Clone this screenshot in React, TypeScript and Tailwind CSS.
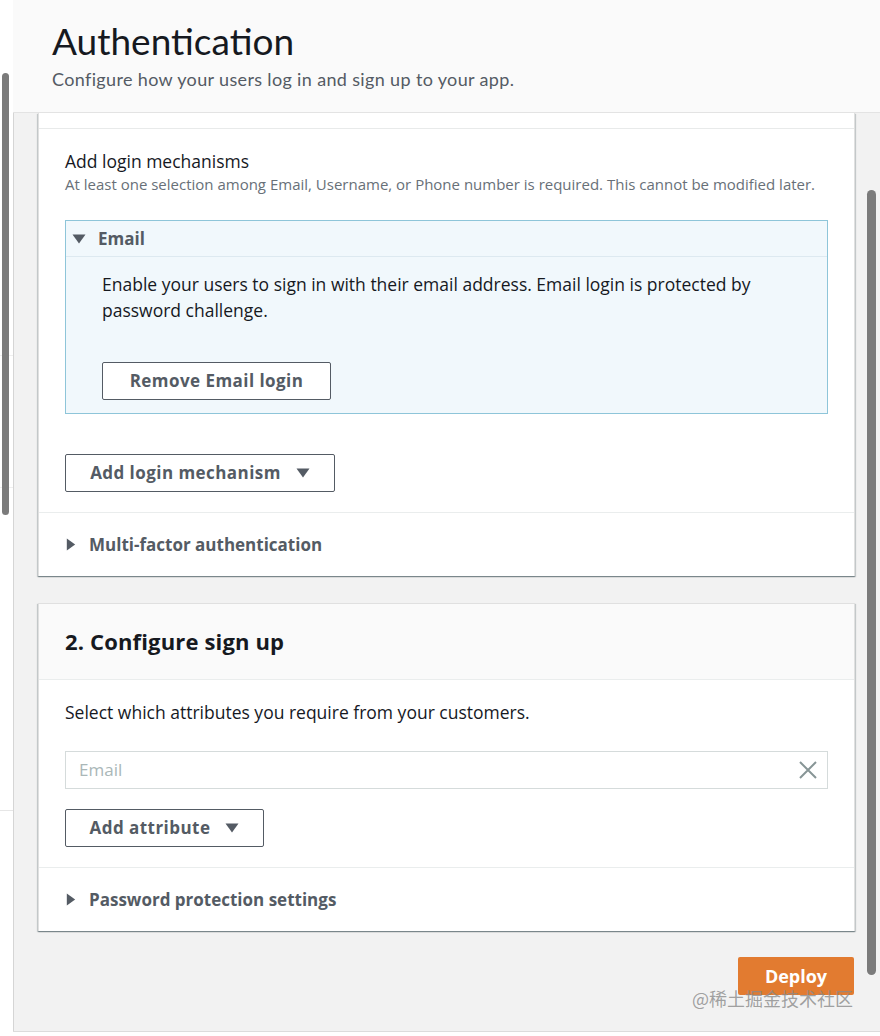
import React from 'react';

const FONT = "font-['Open_Sans','Liberation_Sans',sans-serif]";
const HEAD_FONT = "font-['Lato','Open_Sans',sans-serif]";

function DownTri({ className = '' }: { className?: string }) {
  return (
    <svg viewBox="0 0 14 10" className={className} fill="currentColor">
      <path d="M0.5 0.5h13L7 9.5z" />
    </svg>
  );
}

function RightTri({ className = '' }: { className?: string }) {
  return (
    <svg viewBox="0 0 10 14" className={className} fill="currentColor">
      <path d="M0.5 0.5L9.5 7L0.5 13.5z" />
    </svg>
  );
}

function OutlineButton({ label, caret, className = '' }: { label: string; caret?: boolean; className?: string }) {
  return (
    <button
      className={`h-[38px] flex items-center justify-center gap-[15px] border border-[#545b64] rounded-[2px] bg-white text-[#545b64] text-[17px] font-bold tracking-[0.45px] ${className}`}
    >
      <span>{label}</span>
      {caret && <DownTri className="w-[14px] h-[10px]" />}
    </button>
  );
}

function ExpandRow({ label }: { label: string }) {
  return (
    <div className="h-[63px] flex items-center gap-[13px] px-[27px] text-[#545b64]">
      <RightTri className="w-[10px] h-[13px]" />
      <span className="text-[17px] font-bold">{label}</span>
    </div>
  );
}

const cardShadow =
  'shadow-[0_1px_1px_0_rgba(0,28,36,0.3),1px_1px_1px_0_rgba(0,28,36,0.15),-1px_1px_1px_0_rgba(0,28,36,0.15)]';

export default function App() {
  return (
    <div className={`relative w-[880px] h-[1036px] flex overflow-hidden bg-white ${FONT}`}>
      {/* left gutter */}
      <div className="w-[13px] shrink-0 flex flex-col">
        <div className="h-[355px]" />
        <div className="h-px bg-[#efefef]" />
        <div className="h-[131px]" />
        <div className="h-px bg-[#efefef]" />
        <div className="h-[322px]" />
        <div className="h-px bg-[#e6e6e6]" />
      </div>

      <div className="flex-1 flex flex-col">
        {/* page header */}
        <div className={`h-[113px] shrink-0 bg-[#fafafa] border-b border-[#e3e3e3] pl-[39px] pt-[19px] ${HEAD_FONT}`}>
          <h1 className="text-[37px] leading-[44px] text-[#16191f]">Authentication</h1>
          <p className="mt-[5px] text-[18px] leading-[22px] text-[#545b64] tracking-[0.35px]">
            Configure how your users log in and sign up to your app.
          </p>
        </div>

        {/* content */}
        <div className="flex-1 flex flex-col bg-[#f2f2f2] border-l border-[#d5d5d5] pl-[24px] pr-[25px]">
          {/* card 1 */}
          <div className={`bg-white border-x border-[#e0e0e0] ${cardShadow}`}>
            <div className="h-[16px] border-b border-[#e8eaea]" />
            <div className="px-[26px] pt-[21px] pb-[20px]">
              <div className="text-[17.5px] leading-[22px] text-[#16191f]">Add login mechanisms</div>
              <div className="mt-[2px] text-[15px] leading-[20px] text-[#687078]">
                At least one selection among Email, Username, or Phone number is required. This cannot be modified later.
              </div>

              <div className="mt-[26px] border border-[#8ec5d9] bg-[#f1f8fc]">
                <div className="h-[36px] flex items-center gap-[12px] pl-[6px] text-[#545b64] border-b border-[#dde9f0]">
                  <DownTri className="w-[14px] h-[10px]" />
                  <span className="text-[17px] font-bold">Email</span>
                </div>
                <div className="pl-[36px] pr-[36px] pt-[14px] pb-[13px]">
                  <p className="text-[17.5px] leading-[26px] text-[#16191f]">
                    Enable your users to sign in with their email address. Email login is protected by password challenge.
                  </p>
                  <OutlineButton label="Remove Email login" className="mt-[39px] w-[229px]" />
                </div>
              </div>

              <OutlineButton label="Add login mechanism" caret className="mt-[40px] w-[270px]" />
            </div>
            <div className="border-t border-[#eaeded]">
              <ExpandRow label="Multi-factor authentication" />
            </div>
          </div>

          {/* card 2 */}
          <div className={`mt-[27px] bg-white border border-[#e0e0e0] border-b-0 ${cardShadow}`}>
            <div className="h-[76px] bg-[#fafafa] border-b border-[#eaeded] flex items-center px-[26px]">
              <h2 className="text-[22px] font-bold text-[#16191f] tracking-[0.15px]">2. Configure sign up</h2>
            </div>
            <div className="px-[26px] pt-[19px] pb-[20px]">
              <p className="text-[17.5px] leading-[26px] text-[#16191f]">
                Select which attributes you require from your customers.
              </p>
              <div className="mt-[26px] h-[38px] flex items-center justify-between border border-[#d5dbdb] pl-[13px] pr-[9px]">
                <span className="text-[17px] text-[#aab7b8]">Email</span>
                <svg viewBox="0 0 20 20" className="w-[20px] h-[20px] text-[#879596]" fill="none" stroke="currentColor" strokeWidth="2">
                  <path d="M2 2L18 18M18 2L2 18" />
                </svg>
              </div>
              <OutlineButton label="Add attribute" caret className="mt-[20px] w-[199px]" />
            </div>
            <div className="border-t border-[#eaeded]">
              <ExpandRow label="Password protection settings" />
            </div>
          </div>

          {/* footer */}
          <div className="mt-[26px] flex justify-end">
            <button className="w-[116px] h-[38px] mr-[1px] rounded-[2px] bg-[#e27b30] text-white text-[18px] font-bold">
              Deploy
            </button>
          </div>
          <div className="flex-1" />
          <div className="h-[5px] -mx-[25px] border-t border-[#dcdcdc] bg-white" />
        </div>
      </div>

      {/* scrollbars (overlay) */}
      <div className="absolute left-[2px] top-[73px] w-[7px] h-[442px] rounded-full bg-[#7b7b7b]" />
      <div className="absolute left-[867px] top-[190px] w-[9px] h-[785px] rounded-full bg-[#7b7b7b]" />

      {/* watermark */}
      <div className="absolute left-[692px] top-[985px] text-[18px] leading-[26px] text-[#8a8a8a]/80 font-['Noto_Sans_CJK_SC',sans-serif]">
        @稀土掘金技术社区
      </div>
    </div>
  );
}
